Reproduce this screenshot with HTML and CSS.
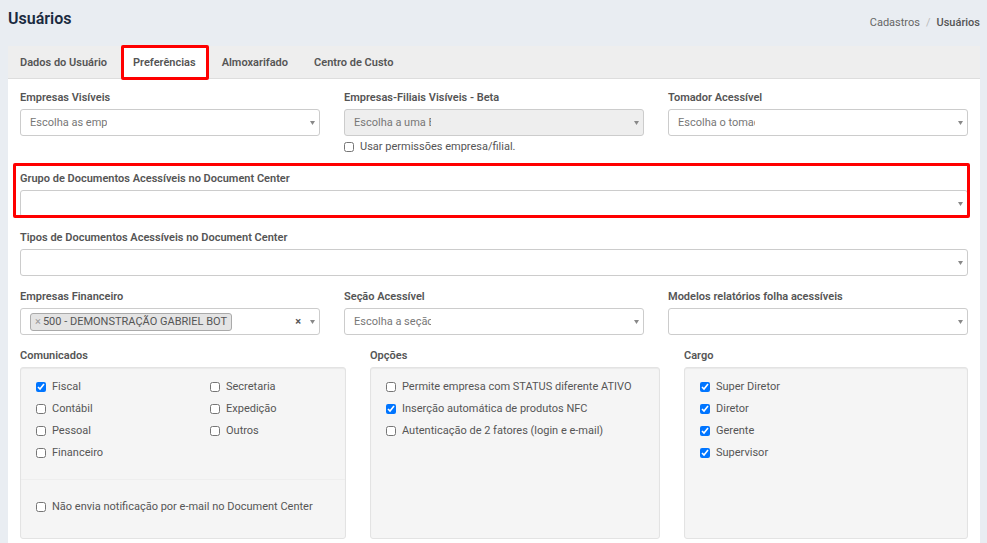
FILE: index.html
```html
<!DOCTYPE html>
<html lang="pt-BR">
<head>
  <meta charset="UTF-8" />
  <meta name="viewport" content="width=device-width, initial-scale=1.0"/>
  <title>Usuários</title>
  <link rel="stylesheet" href="styles.css">
</head>
<body>

  <header class="page-header">
    <h1>Usuários</h1>
    <nav class="breadcrumb">
      <a href="#">Cadastros</a>
      <span class="separator">/</span>
      <a href="#" class="current">Usuários</a>
    </nav>
  </header>

  <main class="card">
    <div class="tabs">
      <button type="button" class="tab">Dados do Usuário</button>
      <button type="button" class="tab active highlight">Preferências</button>
      <button type="button" class="tab">Almoxarifado</button>
      <button type="button" class="tab">Centro de Custo</button>
    </div>

    <form class="preferences">
      <div class="row">
        <div class="field">
          <label for="empresas">Empresas Visíveis</label>
          <select id="empresas" class="select placeholder">
            <option>Escolha as empresas</option>
          </select>
        </div>
        <div class="field">
          <label for="filiais">Empresas-Filiais Visíveis - Beta</label>
          <select id="filiais" class="select placeholder" disabled>
            <option>Escolha a uma Empresa</option>
          </select>
          <label class="check"><input type="checkbox"> Usar permissões empresa/filial.</label>
        </div>
        <div class="field">
          <label for="tomador">Tomador Acessível</label>
          <select id="tomador" class="select placeholder">
            <option>Escolha o tomador</option>
          </select>
        </div>
      </div>

      <div class="field highlight">
        <label for="grupo-doc">Grupo de Documentos Acessíveis no Document Center</label>
        <select id="grupo-doc" class="select"></select>
      </div>

      <div class="field">
        <label for="tipos-doc">Tipos de Documentos Acessíveis no Document Center</label>
        <select id="tipos-doc" class="select"></select>
      </div>

      <div class="row">
        <div class="field">
          <span class="label" id="financeiro-label">Empresas Financeiro</span>
          <div class="select multiple" role="group" aria-labelledby="financeiro-label">
            <span class="tag"><button type="button" class="remove" aria-label="Remover">×</button>500 - DEMONSTRAÇÃO GABRIEL BOT</span>
            <button type="button" class="clear" aria-label="Limpar">×</button>
          </div>
        </div>
        <div class="field">
          <label for="secao">Seção Acessível</label>
          <select id="secao" class="select placeholder">
            <option>Escolha a seção</option>
          </select>
        </div>
        <div class="field">
          <label for="modelos">Modelos relatórios folha acessíveis</label>
          <select id="modelos" class="select"></select>
        </div>
      </div>

      <div class="row panels">
        <fieldset>
          <legend>Comunicados</legend>
          <div class="panel">
            <div class="columns">
              <div class="checks">
                <label class="check"><input type="checkbox" checked> Fiscal</label>
                <label class="check"><input type="checkbox"> Contábil</label>
                <label class="check"><input type="checkbox"> Pessoal</label>
                <label class="check"><input type="checkbox"> Financeiro</label>
              </div>
              <div class="checks">
                <label class="check"><input type="checkbox"> Secretaria</label>
                <label class="check"><input type="checkbox"> Expedição</label>
                <label class="check"><input type="checkbox"> Outros</label>
              </div>
            </div>
            <hr>
            <div class="checks">
              <label class="check"><input type="checkbox"> Não envia notificação por e-mail no Document Center</label>
            </div>
          </div>
        </fieldset>

        <fieldset>
          <legend>Opções</legend>
          <div class="panel">
            <div class="checks">
              <label class="check"><input type="checkbox"> Permite empresa com STATUS diferente ATIVO</label>
              <label class="check"><input type="checkbox" checked> Inserção automática de produtos NFC</label>
              <label class="check"><input type="checkbox"> Autenticação de 2 fatores (login e e-mail)</label>
            </div>
          </div>
        </fieldset>

        <fieldset>
          <legend>Cargo</legend>
          <div class="panel">
            <div class="checks">
              <label class="check"><input type="checkbox" checked> Super Diretor</label>
              <label class="check"><input type="checkbox" checked> Diretor</label>
              <label class="check"><input type="checkbox" checked> Gerente</label>
              <label class="check"><input type="checkbox" checked> Supervisor</label>
            </div>
          </div>
        </fieldset>
      </div>
    </form>
  </main>

</body>
</html>
```
FILE: styles.css
```css
* {
  box-sizing: border-box;
}

body {
  display: flex;
  flex-direction: column;
  min-height: 100vh;
  margin: 0;
  padding: 0 7px 0 8px;
  background-color: #e9edf2;
  color: #555;
  font-family: Roboto, sans-serif;
  font-size: 11px;
  line-height: 16px;
}

button,
select,
input {
  font: inherit;
  color: inherit;
}

.page-header {
  display: flex;
  justify-content: space-between;
  height: 46px;
}

h1 {
  margin: 8px 0 0;
  color: #1a2a40;
  font-size: 16px;
  font-weight: 600;
  line-height: 22px;
}

.breadcrumb {
  display: flex;
  gap: 6px;
  margin-top: 15px;
}

.breadcrumb a {
  color: #666;
  text-decoration: none;
}

.breadcrumb .separator {
  color: #bbb;
}

.breadcrumb .current {
  color: #555;
  font-weight: 500;
}

.card {
  flex: 1;
  background-color: white;
}

/* Tabs */
.tabs {
  display: flex;
  gap: 1px;
  height: 33px;
  background-color: #eee;
  border-bottom: 1px solid #ddd;
}

.tab {
  padding: 2px 13px 0 12px;
  border: none;
  background: none;
  font-weight: 600;
  cursor: pointer;
}

.tab.active {
  background-color: white;
}

.highlight {
  position: relative;
}

.highlight::after {
  content: "";
  position: absolute;
  inset: -7px -2px -1px -7px;
  border: 3px solid #f00;
  border-radius: 2px;
  pointer-events: none;
}

.tab.highlight::after {
  inset: -1px 0 -2px;
}

/* Form */
.preferences {
  display: flex;
  flex-direction: column;
  gap: 12px;
  padding: 10px 12px 4px;
}

.row {
  display: grid;
  grid-template-columns: repeat(3, 1fr);
  gap: 24px;
}

.panels {
  grid-template-columns: 326fr 290fr 284fr;
}

.field {
  display: flex;
  flex-direction: column;
}

.field > label:first-child,
.label,
legend {
  margin-bottom: 2px;
  padding: 0;
  font-weight: 600;
  line-height: 18px;
}

.select {
  appearance: none;
  width: 100%;
  height: 27px;
  padding: 0 9px;
  border: 1px solid #ccc;
  border-radius: 3px;
  background: white url("data:image/svg+xml,%3Csvg xmlns='http://www.w3.org/2000/svg' width='5' height='4'%3E%3Cpath d='M0 0h5L2.5 4z' fill='%23888'/%3E%3C/svg%3E") no-repeat right 4px center;
}

.select.placeholder {
  padding-right: calc(100% - 88px);
  color: #777;
}

.select:disabled {
  background-color: #eee;
  opacity: 1;
}

.multiple {
  display: flex;
  align-items: center;
  justify-content: space-between;
  padding-right: 18px;
}

.tag {
  display: flex;
  height: 18px;
  padding: 0 4px;
  border: 1px solid #aaa;
  border-radius: 3px;
  background-color: #e4e4e4;
}

.remove,
.clear {
  padding: 0;
  border: none;
  background: none;
  cursor: pointer;
}

.remove {
  margin-right: 2px;
  color: #999;
}

.clear {
  font-weight: 700;
}

.check {
  display: flex;
  align-items: center;
  gap: 6px;
  height: 22px;
}

.check input {
  width: 10px;
  height: 10px;
  margin: 0;
}

fieldset {
  min-width: 0;
  margin: 0;
  padding: 0;
  border: none;
}

.panel {
  height: 172px;
  padding: 8px 0;
  border: 1px solid #e3e3e3;
  border-radius: 3px;
  background-color: #f5f5f5;
  box-shadow: inset 0 1px 1px rgba(0, 0, 0, 0.05);
}

.columns {
  display: grid;
  grid-template-columns: 174fr 150fr;
}

.checks {
  padding-left: 15px;
}

hr {
  margin: 15px 0 16px;
  border: none;
  border-top: 1px solid #eee;
}
```
